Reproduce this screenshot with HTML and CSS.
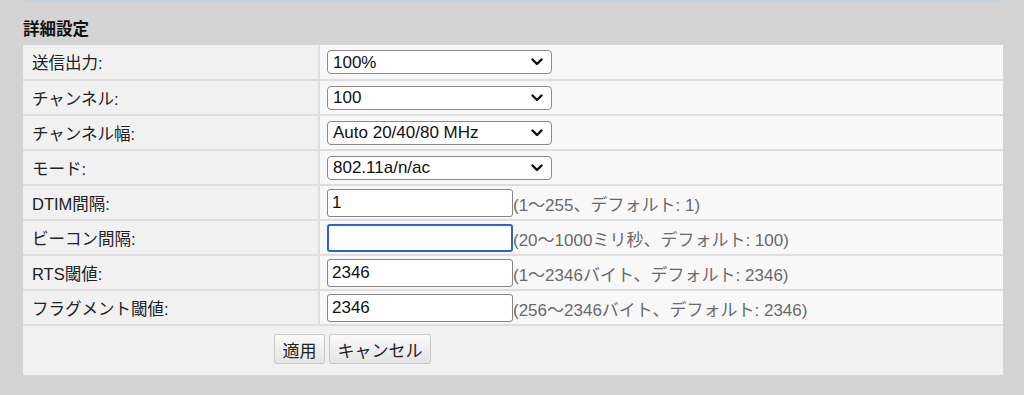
FILE: index.html
```html
<!DOCTYPE html>
<html lang="ja">
  <head>
    <meta charset="UTF-8" />
    <meta name="viewport" content="width=device-width, initial-scale=1.0" />
    <title>詳細設定</title>
    <link rel="stylesheet" href="styles.css">
  </head>
  <body>
    <div class="panel">
      <div class="topline"></div>
      <h3 class="title">詳細設定</h3>
      <table class="settings">
        <tbody>
          <tr>
            <td class="label">送信出力:</td>
            <td class="value">
              <span class="select-wrap">
                <select class="select"><option>100%</option></select>
                <svg class="chevron" width="12" height="8" viewBox="0 0 12 8"><path d="M1.5 1.5 L6 6 L10.5 1.5" fill="none" stroke="#111" stroke-width="2.4" stroke-linecap="round" stroke-linejoin="round"/></svg>
              </span>
            </td>
          </tr>
          <tr>
            <td class="label">チャンネル:</td>
            <td class="value">
              <span class="select-wrap">
                <select class="select"><option>100</option></select>
                <svg class="chevron" width="12" height="8" viewBox="0 0 12 8"><path d="M1.5 1.5 L6 6 L10.5 1.5" fill="none" stroke="#111" stroke-width="2.4" stroke-linecap="round" stroke-linejoin="round"/></svg>
              </span>
            </td>
          </tr>
          <tr>
            <td class="label">チャンネル幅:</td>
            <td class="value">
              <span class="select-wrap">
                <select class="select"><option>Auto 20/40/80 MHz</option></select>
                <svg class="chevron" width="12" height="8" viewBox="0 0 12 8"><path d="M1.5 1.5 L6 6 L10.5 1.5" fill="none" stroke="#111" stroke-width="2.4" stroke-linecap="round" stroke-linejoin="round"/></svg>
              </span>
            </td>
          </tr>
          <tr>
            <td class="label">モード:</td>
            <td class="value">
              <span class="select-wrap">
                <select class="select"><option>802.11a/n/ac</option></select>
                <svg class="chevron" width="12" height="8" viewBox="0 0 12 8"><path d="M1.5 1.5 L6 6 L10.5 1.5" fill="none" stroke="#111" stroke-width="2.4" stroke-linecap="round" stroke-linejoin="round"/></svg>
              </span>
            </td>
          </tr>
          <tr>
            <td class="label">DTIM間隔:</td>
            <td class="value"><input class="text" type="text" value="1"><span class="hint">(1〜255、デフォルト: 1)</span></td>
          </tr>
          <tr>
            <td class="label">ビーコン間隔:</td>
            <td class="value"><input class="text is-focused" type="text" value=""><span class="hint">(20〜1000ミリ秒、デフォルト: 100)</span></td>
          </tr>
          <tr>
            <td class="label">RTS閾値:</td>
            <td class="value"><input class="text" type="text" value="2346"><span class="hint">(1〜2346バイト、デフォルト: 2346)</span></td>
          </tr>
          <tr>
            <td class="label">フラグメント閾値:</td>
            <td class="value"><input class="text" type="text" value="2346"><span class="hint">(256〜2346バイト、デフォルト: 2346)</span></td>
          </tr>
        </tbody>
      </table>
      <div class="actions">
        <button class="btn btn-apply">適用</button>
        <button class="btn btn-cancel">キャンセル</button>
      </div>
    </div>
  </body>
</html>
```

FILE: styles.css
```css
* {
  padding: 0;
  margin: 0;
  box-sizing: border-box;
}
body {
  background: #d4d4d4;
  font-family: "Liberation Sans", "Noto Sans CJK JP", sans-serif;
  font-size: 16.5px;
  color: #222;
  overflow: hidden;
}
.panel {
  width: 980px;
  margin-left: 23px;
}
.topline {
  height: 2px;
  background: #c6d2de;
}
.title {
  padding: 17px 0 5px;
  font-size: 16.5px;
  line-height: 21px;
  font-weight: bold;
  color: #111;
}
.settings {
  width: 100%;
  border-collapse: collapse;
}
.settings td {
  height: 35px;
  border-bottom: 2px solid #dedede;
  vertical-align: middle;
}
.label {
  width: 296px;
  padding-left: 9px;
  background: #f1f1f1;
  border-right: 2px solid #dedede;
}
.value {
  padding-left: 7px;
  background: #f8f8f8;
}
.select-wrap {
  position: relative;
  display: inline-block;
  vertical-align: middle;
}
.select {
  appearance: none;
  -webkit-appearance: none;
  display: block;
  width: 225px;
  height: 24px;
  padding: 0 24px 0 5px;
  border: 1px solid #8a8a8a;
  border-radius: 4px;
  background: #fff;
  font-family: inherit;
  font-size: 17px;
  color: #111;
}
.chevron {
  position: absolute;
  right: 9px;
  top: 8px;
  pointer-events: none;
}
.text {
  width: 186px;
  height: 28px;
  padding: 0 4px;
  border: 1px solid #858585;
  border-radius: 3px;
  background: #fff;
  font-family: inherit;
  font-size: 17px;
  color: #111;
  vertical-align: middle;
  outline: none;
}
.text.is-focused {
  border: 2px solid #2c63c8;
}
.hint {
  font-size: 17px;
  color: #6a6a6a;
  vertical-align: middle;
}
.actions {
  display: flex;
  gap: 4px;
  height: 49px;
  padding: 8px 0 0 251px;
  background: #f1f1f1;
}
.btn {
  height: 30px;
  border: 1px solid #c9c9c9;
  border-radius: 2px;
  background: linear-gradient(to bottom, #fafafa, #e4e4e4);
  font-family: "Noto Sans CJK JP", sans-serif;
  font-size: 17px;
  color: #222;
}
.btn-apply {
  width: 51px;
}
.btn-cancel {
  width: 102px;
}
```
